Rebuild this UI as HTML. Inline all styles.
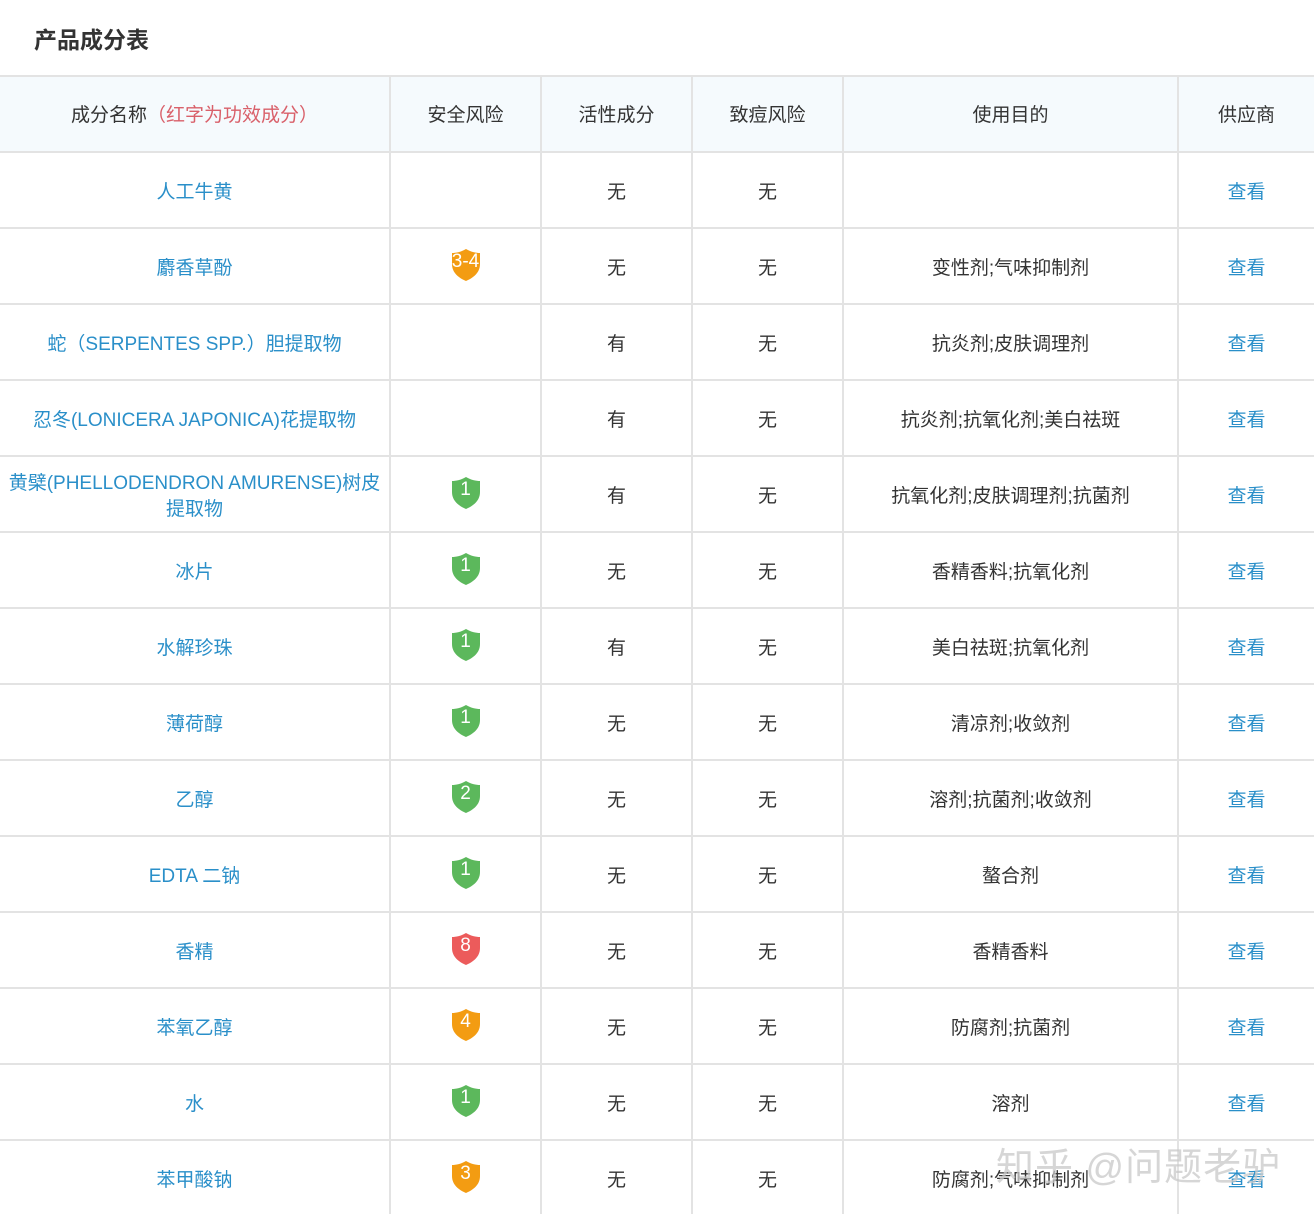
<!DOCTYPE html>
<html><head><meta charset="utf-8"><style>
body{margin:0;width:1314px;height:1214px;overflow:hidden;background:#fff;font-family:"Liberation Sans","Noto Sans CJK SC",sans-serif;position:relative}
.title{position:absolute;left:34px;top:21px;font-size:23px;font-weight:bold;color:#333}
.row{position:absolute;left:0;width:1314px;height:74px;border-top:2px solid #e3e3e3}
.hd{background:#f5fafd;color:#333}
.c{position:absolute;top:0;height:74px;padding-top:5px;box-sizing:border-box;display:flex;align-items:center;justify-content:center;text-align:center;font-size:19px;color:#333;line-height:26px}
.c0{left:0;width:389px;color:#2a8fc9}
.c1{left:391px;width:149px}
.c2{left:542px;width:149px}
.c3{left:693px;width:149px}
.c4{left:844px;width:333px}
.c5{left:1179px;width:135px;color:#2a8fc9}
.hd .c0{color:#333}
.hd .c{padding-top:4px}
.vl{position:absolute;top:76px;width:2px;height:1138px;background:#e3e3e3;z-index:2}
.sh{position:relative;width:32px;height:34px;margin-top:-8px}
.sh span{position:absolute;left:0;right:0;top:3px;text-align:center;color:#fff;font-size:19px;line-height:22px}
.wm{position:absolute;left:996px;top:1136px;font-size:38px;color:rgba(200,200,200,0.75);letter-spacing:1px;z-index:3}
</style></head><body>
<div class="title">产品成分表</div>
<div class="vl" style="left:389px"></div><div class="vl" style="left:540px"></div><div class="vl" style="left:691px"></div><div class="vl" style="left:842px"></div><div class="vl" style="left:1177px"></div>
<div class="row hd" style="top:75px"><div class="c c0">成分名称<span style="color:#d9606a">（红字为功效成分）</span></div><div class="c c1">安全风险</div><div class="c c2">活性成分</div><div class="c c3">致痘风险</div><div class="c c4">使用目的</div><div class="c c5" style="color:#333">供应商</div></div>
<div id="rows"></div>
<div class="wm">知乎 @问题老驴</div>
<script>
var d=[["人工牛黄","","无",""],["麝香草酚","3-4o","无","变性剂;气味抑制剂"],["蛇（SERPENTES SPP.）胆提取物","","有","抗炎剂;皮肤调理剂"],["忍冬(LONICERA JAPONICA)花提取物","","有","抗炎剂;抗氧化剂;美白祛斑"],["黄檗(PHELLODENDRON AMURENSE)树皮<br>提取物","1g","有","抗氧化剂;皮肤调理剂;抗菌剂"],["冰片","1g","无","香精香料;抗氧化剂"],["水解珍珠","1g","有","美白祛斑;抗氧化剂"],["薄荷醇","1g","无","清凉剂;收敛剂"],["乙醇","2g","无","溶剂;抗菌剂;收敛剂"],["EDTA 二钠","1g","无","螯合剂"],["香精","8r","无","香精香料"],["苯氧乙醇","4o","无","防腐剂;抗菌剂"],["水","1g","无","溶剂"],["苯甲酸钠","3o","无","防腐剂;气味抑制剂"]];
var col={g:"#5cb85c",o:"#f39c12",r:"#ec5b5b"};var h="";
d.forEach(function(r,i){var s="";if(r[1]){var n=r[1].slice(0,-1),c=col[r[1].slice(-1)];s='<div class="sh"><svg width="32" height="34" viewBox="0 0 32 34"><path d="M16 1 C11 4 6 5 2 5 L2 16 C2 25 9 30 16 33 C23 30 30 25 30 16 L30 5 C26 5 21 4 16 1Z" fill="'+c+'"/></svg><span'+(n.length>1?' style="left:-6px;right:-6px"':'')+'>'+n+'</span></div>';}
h+='<div class="row" style="top:'+(151+i*76)+'px"><div class="c c0">'+r[0]+'</div><div class="c c1">'+s+'</div><div class="c c2">'+r[2]+'</div><div class="c c3">无</div><div class="c c4">'+r[3]+'</div><div class="c c5">查看</div></div>';});
document.getElementById("rows").innerHTML=h;
</script>
</body></html>
